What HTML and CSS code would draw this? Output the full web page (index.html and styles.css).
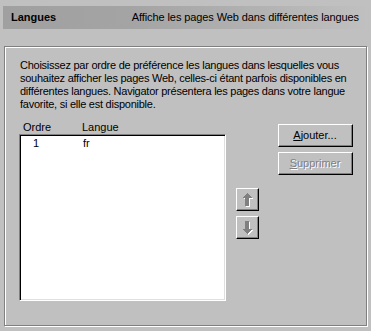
FILE: index.html
```html
<!DOCTYPE html>
<html lang="fr">
<head>
<meta charset="utf-8">
<title>Langues</title>
<link rel="stylesheet" href="styles.css">
</head>
<body>
<div class="page">
  <div class="header">
    <span class="title">Langues</span>
    <span class="desc">Affiche les pages Web dans différentes langues</span>
  </div>
  <div class="group">
    <p class="intro">Choisissez par ordre de préférence les langues dans lesquelles vous<br>souhaitez afficher les pages Web, celles-ci étant parfois disponibles en<br>différentes langues. Navigator présentera les pages dans votre langue<br>favorite, si elle est disponible.</p>
    <div class="row">
      <div class="listcol">
        <div class="cols"><span class="c1">Ordre</span><span class="c2">Langue</span></div>
        <div class="listbox">
          <div class="item"><span class="c1 num">1</span><span class="c2">fr</span></div>
        </div>
      </div>
      <div class="arrows">
        <div class="btn arrow">
          <svg width="12" height="14" viewBox="0 0 12 14" shape-rendering="crispEdges">
            <polygon points="6,1 11,6 8,6 8,14 4,14 4,6 1,6" fill="#fff"/>
            <polygon points="5,0 10,5 7,5 7,13 3,13 3,5 0,5" fill="#808080"/>
          </svg>
        </div>
        <div class="btn arrow">
          <svg width="12" height="14" viewBox="0 0 12 14" shape-rendering="crispEdges">
            <polygon points="4,1 8,1 8,9 11,9 6,14 1,9 4,9" fill="#fff"/>
            <polygon points="3,0 7,0 7,8 10,8 5,13 0,8 3,8" fill="#808080"/>
          </svg>
        </div>
      </div>
      <div class="buttons">
        <div class="btn push"><span><u>A</u>jouter...</span></div>
        <div class="btn push disabled"><span><u>S</u>upprimer</span></div>
      </div>
    </div>
  </div>
</div>
</body>
</html>
```

FILE: styles.css
```css
* { box-sizing: border-box; }
html, body {
  margin: 0;
  padding: 0;
  background: #c0c0c0;
}
body {
  font-family: "Liberation Sans", Arial, sans-serif;
  font-size: 11px;
  line-height: 13px;
  color: #000;
  width: 371px;
  height: 331px;
  overflow: hidden;
}
.page {
  padding-top: 6px;
}
.header {
  margin: 0 2px 0 3px;
  height: 23px;
  display: flex;
  align-items: center;
  justify-content: space-between;
  padding: 0 10px 0 8px;
  background: linear-gradient(to right, #a0a0a0 0%, #a4a4a4 35%, #b2b2b2 70%, #c0c0c0 100%);
}
.title {
  font-weight: bold;
}
.desc {
  letter-spacing: -0.1px;
}
.group {
  margin: 17px 0 0 4px;
  width: 363px;
  height: 280px;
  border: 1px solid #808080;
  box-shadow: 1px 1px 0 #fff, inset 1px 1px 0 #fff;
  padding: 12px 0 0 14px;
}
.intro {
  margin: 0 0 0 1px;
  white-space: nowrap;
  letter-spacing: -0.25px;
}
.row {
  display: flex;
  margin-top: 10px;
}
.listcol {
  width: 207px;
}
.cols {
  display: flex;
  height: 13px;
}
.c1 {
  width: 63px;
  padding-left: 4px;
}
.listbox {
  height: 167px;
  background: #fff;
  border: 1px solid;
  border-color: #808080 #fff #fff #808080;
  box-shadow: inset 1px 1px 0 #000, inset -1px -1px 0 #dfdfdf;
  padding: 2px 0 0 1px;
}
.item {
  display: flex;
}
.item .c1 {
  width: 62px;
  padding-left: 12px;
}
.arrows {
  margin: 67px 0 0 10px;
  display: flex;
  flex-direction: column;
  gap: 5px;
}
.btn {
  background: #c0c0c0;
  border: 1px solid;
  border-color: #fff #000 #000 #fff;
  box-shadow: inset -1px -1px 0 #808080;
  display: flex;
  align-items: center;
  justify-content: center;
}
.arrow {
  width: 23px;
  height: 23px;
  padding: 0 0 0 1px;
}
.arrow svg {
  display: block;
}
.buttons {
  margin: 3px 0 0 19px;
  display: flex;
  flex-direction: column;
  gap: 5px;
}
.push {
  width: 75px;
  height: 23px;
  padding: 0 1px 1px 0;
}
.disabled {
  color: #808080;
  text-shadow: 1px 1px 0 #fff;
}
```
